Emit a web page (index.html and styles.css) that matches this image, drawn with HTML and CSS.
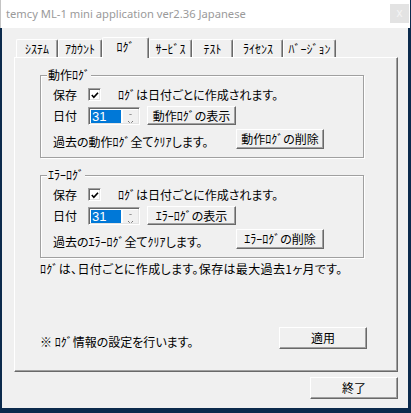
FILE: index.html
```html
<!DOCTYPE html>
<html lang="ja">
<head>
<meta charset="utf-8">
<link rel="stylesheet" href="styles.css">
</head>
<body>
<div class="window">
  <div class="titlebar">
    <span class="title">temcy ML-1 mini application ver2.36 Japanese</span>
    <span class="close">x</span>
  </div>
  <div class="client">
    <div class="tabs">
      <div class="tab t1">ｼｽﾃﾑ</div>
      <div class="tab t2">ｱｶｳﾝﾄ</div>
      <div class="tab t3 sel">ﾛｸﾞ</div>
      <div class="tab t4">ｻｰﾋﾞｽ</div>
      <div class="tab t5">ﾃｽﾄ</div>
      <div class="tab t6">ﾗｲｾﾝｽ</div>
      <div class="tab t7">ﾊﾞｰｼﾞｮﾝ</div>
    </div>
    <div class="panel">
      <div class="group">
        <span class="legend">動作ﾛｸﾞ</span>
        <div class="row r1">
          <span class="lbl">保存</span>
          <span class="chk"><svg width="11" height="11" viewBox="0 0 11 11"><path d="M2 5 L4.2 7.4 L8.8 2.4" fill="none" stroke="#000" stroke-width="1.8"/></svg></span>
          <span class="note">ﾛｸﾞは日付ごとに作成されます。</span>
        </div>
        <div class="row r2">
          <span class="lbl">日付</span>
          <span class="spin"><span class="val">31</span><span class="arrows"><svg width="15" height="14" viewBox="0 0 15 14"><path d="M6.5 5 L7.5 4 L8.5 5" fill="none" stroke="#777" stroke-width="1"/><rect x="5" y="11" width="1" height="1" fill="#777"/><rect x="9" y="11" width="1" height="1" fill="#777"/><rect x="6" y="12" width="1" height="1" fill="#999"/><rect x="8" y="12" width="1" height="1" fill="#999"/></svg></span></span>
          <button class="btn show">動作ﾛｸﾞの表示</button>
        </div>
        <div class="row r3">
          <span class="clear">過去の動作ﾛｸﾞ全てｸﾘｱします。</span>
          <button class="btn del">動作ﾛｸﾞの削除</button>
        </div>
      </div>
      <div class="group g2">
        <span class="legend">ｴﾗｰﾛｸﾞ</span>
        <div class="row r1">
          <span class="lbl">保存</span>
          <span class="chk"><svg width="11" height="11" viewBox="0 0 11 11"><path d="M2 5 L4.2 7.4 L8.8 2.4" fill="none" stroke="#000" stroke-width="1.8"/></svg></span>
          <span class="note">ﾛｸﾞは日付ごとに作成されます。</span>
        </div>
        <div class="row r2">
          <span class="lbl">日付</span>
          <span class="spin"><span class="val">31</span><span class="arrows"><svg width="15" height="14" viewBox="0 0 15 14"><path d="M6.5 5 L7.5 4 L8.5 5" fill="none" stroke="#777" stroke-width="1"/><rect x="5" y="11" width="1" height="1" fill="#777"/><rect x="9" y="11" width="1" height="1" fill="#777"/><rect x="6" y="12" width="1" height="1" fill="#999"/><rect x="8" y="12" width="1" height="1" fill="#999"/></svg></span></span>
          <button class="btn show">ｴﾗｰﾛｸﾞの表示</button>
        </div>
        <div class="row r3">
          <span class="clear">過去のｴﾗｰﾛｸﾞ全てｸﾘｱします。</span>
          <button class="btn del">ｴﾗｰﾛｸﾞの削除</button>
        </div>
      </div>
      <p class="info">ﾛｸﾞは、日付ごとに作成します。保存は最大過去1ヶ月です。</p>
      <div class="foot">
        <span class="hint">※ ﾛｸﾞ情報の設定を行います。</span>
        <button class="btn apply">適用</button>
      </div>
    </div>
    <div class="bottom">
      <button class="btn quit">終了</button>
    </div>
  </div>
</div>
</body>
</html>
```

FILE: styles.css
```css
* { box-sizing: border-box; }

body {
  margin: 0;
  width: 411px;
  height: 413px;
  overflow: hidden;
  background: #0b2a4c;
  font-family: "Noto Sans CJK JP", sans-serif;
  font-size: 12px;
  line-height: 12px;
  color: #000;
  font-feature-settings: "palt";
}

.window {
  width: 410px;
  display: flex;
  flex-direction: column;
}

.titlebar {
  height: 28px;
  background: #fff;
  border-left: 1px solid #c4c4c4;
  display: flex;
  align-items: flex-start;
}

.title {
  font-family: "Noto Sans", sans-serif;
  font-feature-settings: normal;
  font-size: 11.2px;
  line-height: 16px;
  color: #9a9a9a;
  margin: 6px 0 0 5px;
}

.close {
  margin: 4px 1px 0 auto;
  width: 19px;
  height: 19px;
  background: #e3e3e3;
  color: #f4f4f4;
  font-family: "Liberation Sans", sans-serif;
  font-size: 12px;
  line-height: 18px;
  text-align: center;
}

.client {
  height: 380px;
  margin: 0 2px 0 2px;
  background: #f0f0f0;
  padding: 9px 0 0 12px;
}

.tabs {
  display: flex;
  align-items: flex-end;
  height: 20px;
  padding-left: 2px;
}

.tab {
  height: 18px;
  border: 1px solid;
  border-bottom: none;
  border-color: #fff #696969 #fff #fff;
  box-shadow: inset -1px 0 #a0a0a0;
  border-radius: 2px 2px 0 0;
  text-align: center;
  padding-top: 3px;
  white-space: nowrap;
}

.tab.sel {
  height: 21px;
  margin-bottom: -1px;
  position: relative;
  z-index: 2;
  background: #f0f0f0;
  padding-top: 3px;
}

.t1 { width: 42px; }
.t2 { width: 44px; }
.t3 { width: 47px; }
.t4 { width: 43px; }
.t5 { width: 41px; }
.t6 { width: 50px; }
.t7 { width: 53px; }

.panel {
  width: 384px;
  height: 315px;
  border: 1px solid;
  border-color: #fff #696969 #696969 #fff;
  box-shadow: inset -1px -1px #a0a0a0;
  padding: 17px 0 22px 25px;
  display: flex;
  flex-direction: column;
}

.group {
  position: relative;
  width: 324px;
  height: 83px;
  border: 1px solid #a0a0a0;
  box-shadow: inset 1px 1px #fff, 1px 1px #fff;
  padding: 12px 0 0 12px;
}

.g2 { margin-top: 17px; }

.legend {
  position: absolute;
  left: 6px;
  top: -7px;
  background: #f0f0f0;
  padding: 0 1px;
}

.row {
  display: flex;
  align-items: center;
}

.r1 { height: 13px; }
.r2 { height: 19px; margin-top: 5px; }
.r3 { height: 20px; margin-top: 4px; }

.lbl { width: 35px; }

.chk {
  width: 13px;
  height: 13px;
  background: #fff;
  border: 1px solid;
  border-color: #a0a0a0 #fff #fff #a0a0a0;
  box-shadow: inset 1px 1px #696969, inset -1px -1px #e3e3e3;
  padding: 1px 0 0 1px;
  display: flex;
}

.note { margin-left: 17px; }

.spin {
  width: 52px;
  height: 18px;
  background: #fff;
  border: 1px solid;
  border-color: #a0a0a0 #fff #fff #a0a0a0;
  box-shadow: inset 1px 1px #696969, inset -1px -1px #e3e3e3;
  padding: 2px 1px 1px 2px;
  display: flex;
}

.val {
  width: 31px;
  height: 13px;
  background: #0078d7;
  color: #fff;
  font-family: "Liberation Sans", sans-serif;
  font-size: 13px;
  line-height: 13px;
  padding-left: 1px;
}

.arrows {
  margin-left: 2px;
  width: 15px;
  height: 13px;
  background: #f0f0f0;
  display: flex;
}

.btn {
  font-family: "Noto Sans CJK JP", sans-serif;
  font-feature-settings: "palt";
  font-size: 12px;
  line-height: 12px;
  color: #000;
  background: #f0f0f0;
  border: 1px solid;
  border-color: #fff #696969 #696969 #fff;
  box-shadow: inset -1px -1px #a0a0a0;
  border-radius: 0;
  padding: 0;
  margin: 0;
}

.show { width: 89px; height: 19px; margin-left: 7px; }

.clear { width: 183px; padding-top: 5px; }

.del { width: 88px; height: 20px; }

.info { margin: 5px 0 0 0; letter-spacing: 0.35px; }

.foot {
  margin-top: auto;
  display: flex;
  align-items: flex-end;
  padding-right: 30px;
}

.hint { flex: 1; padding-bottom: 1px; }

.apply { width: 88px; height: 22px; }

.bottom {
  width: 384px;
  display: flex;
  justify-content: flex-end;
  margin-top: 5px;
}

.quit { width: 88px; height: 22px; }
```
